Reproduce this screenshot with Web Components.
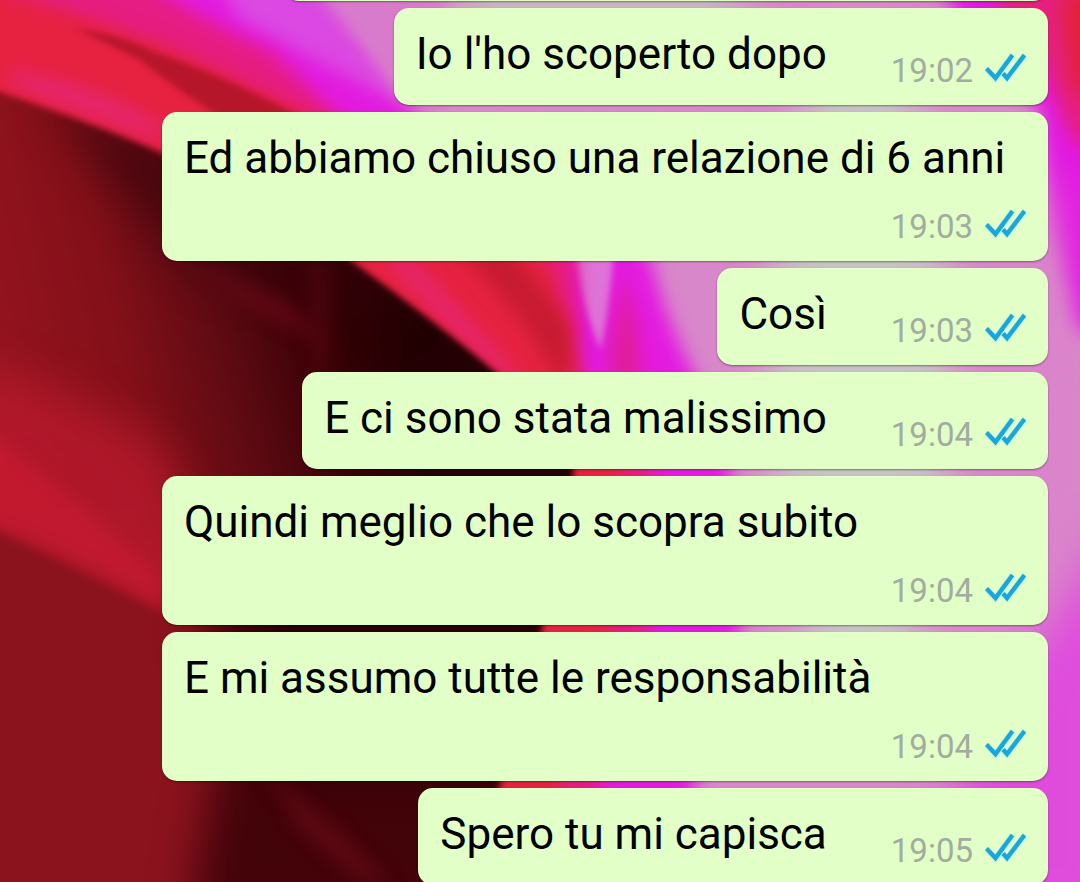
<!DOCTYPE html>
<html lang="it">
<head>
<meta charset="utf-8">
<meta name="viewport" content="width=device-width, initial-scale=1">
<title>Chat</title>
<style>
  html, body { margin: 0; height: 100%; }
  body { font-family: Roboto, "Liberation Sans", sans-serif; }
</style>
</head>
<body>
<chat-screen>
  <chat-bubble class="earlier" aria-hidden="true"></chat-bubble>
  <chat-bubble time="19:02">Io l'ho scoperto dopo</chat-bubble>
  <chat-bubble time="19:03">Ed abbiamo chiuso una relazione di 6 anni</chat-bubble>
  <chat-bubble time="19:03">Così</chat-bubble>
  <chat-bubble time="19:04">E ci sono stata malissimo</chat-bubble>
  <chat-bubble time="19:04">Quindi meglio che lo scopra subito</chat-bubble>
  <chat-bubble time="19:04">E mi assumo tutte le responsabilità</chat-bubble>
  <chat-bubble time="19:05">Spero tu mi capisca</chat-bubble>
</chat-screen>

<template id="screen">
  <style>
    :host { display: block; position: relative; height: 100vh; overflow: hidden; background: #93141f; }
    chat-wallpaper { position: absolute; inset: 0; }
    .thread {
      position: relative;
      display: flex; flex-direction: column; align-items: flex-end; gap: 7px;
      /* the thread is scrolled: only the edge of the first bubble is in view */
      margin-top: -96px;
      padding: 0 32px 0 162px;
    }
    ::slotted(.earlier) { width: 764px; }
  </style>
  <chat-wallpaper></chat-wallpaper>
  <main class="thread"><slot></slot></main>
</template>

<template id="bubble">
  <style>
    :host {
      display: flex; flex-wrap: wrap; gap: 13px 64px; box-sizing: border-box;
      max-width: 100%; padding: 20px 22px 15px 22px; border-radius: 15px;
      background: #e1ffc7; box-shadow: 0 1px 2px rgba(0, 0, 0, .4);
    }
    p { margin: 0; padding-bottom: 10px; min-height: 52px; font-size: 44px; line-height: 52px; color: #000; }
    .meta { display: flex; align-items: flex-end; gap: 12px; margin-left: auto; }
    time { font-size: 33px; line-height: 39px; color: #a2aca0; }
    :host(:not([time])) .meta { display: none; }
  </style>
  <p><slot></slot></p>
  <div class="meta"><time></time><read-ticks></read-ticks></div>
</template>

<template id="ticks">
  <style>
    :host { display: block; width: 41px; height: 39px; }
    svg { display: block; }
  </style>
  <svg width="41" height="39" viewBox="0 0 41 39" role="img" aria-label="Letto" fill="none" stroke-linecap="butt">
    <g stroke="#c0f7e8" stroke-width="6.400"><path d="M1 18L10.500 27.500L28 4M17.500 23L22 27.500L40 4"/></g>
    <g stroke="#1ba5da" stroke-width="4.400"><path d="M1.500 17.500L10.500 27L27.500 4M18 22.500L22 27L39.500 4"/></g>
  </svg>
</template>

<template id="wallpaper">
  <style>
    :host { display: block; }
    svg { display: block; width: 100%; height: 100%; }
    filter { color-interpolation-filters: sRGB; }
  </style>
  <svg viewBox="0 0 1080 882" preserveAspectRatio="none" aria-hidden="true">
    <defs>
      <filter id="b3" filterUnits="userSpaceOnUse" x="-100" y="-100" width="1280" height="1100"><feGaussianBlur stdDeviation="3"/></filter>
      <filter id="b9" filterUnits="userSpaceOnUse" x="-100" y="-100" width="1280" height="1100"><feGaussianBlur stdDeviation="9"/></filter>
      <filter id="b20" filterUnits="userSpaceOnUse" x="-100" y="-100" width="1280" height="1100"><feGaussianBlur stdDeviation="22"/></filter>
      <linearGradient id="dark" gradientUnits="userSpaceOnUse" x1="0" y1="500" x2="420" y2="400">
        <stop offset="0" stop-color="#98141f"/><stop offset=".35" stop-color="#841019"/>
        <stop offset=".6" stop-color="#5c0a12"/><stop offset=".82" stop-color="#360005"/><stop offset="1" stop-color="#220003"/>
      </linearGradient>
      <clipPath id="in"><path d="M-40 78L0 92Q90 122 160 152Q260 195 350 260Q440 325 500 376Q560 425 574 470L542 628L500 784L470 920H-40Z"/></clipPath>
    </defs>
    <rect width="1080" height="882" fill="#d987cb"/>
    <!-- pale centre of the petals -->
    <ellipse cx="860" cy="370" rx="90" ry="340" fill="#c8c2c4" filter="url(#b20)"/>
    <ellipse cx="600" cy="10" rx="150" ry="60" fill="#c9b6c0" filter="url(#b20)"/>
    <!-- right edge -->
    <path d="M930 -30L960 20L1040 110L1050 220L1075 330L1120 340V-30Z" fill="#e21ae2" filter="url(#b9)"/>
    <path d="M1030 180L1050 190L1060 300L1072 350L1060 640L1030 640Z" fill="#db84cb" filter="url(#b20)"/>
    <path d="M975 -30L1040 60L1068 130L1120 190V-30Z" fill="#e5207c" filter="url(#b9)"/>
    <path d="M1062 0L1120 -20V105L1074 90Z" fill="#e22134" filter="url(#b9)"/>
    <path d="M1000 700L1120 520V920H900Z" fill="#df4cdc" filter="url(#b20)"/>
    <!-- violet and magenta folds -->
    <path d="M150 -40H215Q300 10 350 50Q400 105 470 150L650 255Q665 320 695 375L730 470Q745 560 740 640L690 800L680 920H420V300L280 110L120 20Z" fill="#e31be0" filter="url(#b9)"/>
    <path d="M215 -20H320Q370 40 400 100Q330 70 240 20Z" fill="#db48e2" filter="url(#b9)"/>
    <path d="M310 -20L440 -20L450 110L400 90Z" fill="#d87bcb" filter="url(#b9)"/>
    <path d="M574 245H614Q610 310 601 350Q582 310 574 245Z" fill="#df74d8" filter="url(#b3)"/>
    <path d="M624 275Q642 330 640 400L615 430L610 360Z" fill="#e01d98" filter="url(#b9)"/>
    <!-- red band -->
    <path d="M-40 -40H110Q200 20 270 50L340 118L575 245L582 372L655 470L650 628L600 784L570 920H300L300 400L-40 130Z" fill="#e61d82" filter="url(#b9)"/>
    <path d="M-40 -10L10 -6Q150 35 220 70L340 130L550 262L574 372L622 470L610 628L560 784L530 920H250V420L-40 220Z" fill="#e62240" filter="url(#b9)"/>
    <path d="M75 28Q130 38 150 50Q230 78 300 116L225 120Q170 85 140 60Z" fill="#ae1427" opacity=".85" filter="url(#b3)"/>
    <path d="M455 250H510Q555 300 571 330L569 380H558Q515 300 455 250Z" fill="#c71b30" filter="url(#b9)"/>
    <path d="M10 70Q100 85 160 125L165 142Q90 115 10 84ZM385 258H410L460 310L520 378H500Z" fill="#e6267d" opacity=".8" filter="url(#b9)"/>
    <!-- dark petal -->
    <g filter="url(#b3)">
      <g clip-path="url(#in)">
        <rect x="-40" y="0" width="700" height="940" fill="url(#dark)"/>
        <path d="M40 92L160 140L400 270V320L190 270L100 170Z" fill="#35040a" opacity=".6" filter="url(#b20)"/>
        <path d="M-40 360L0 370Q80 395 160 445L250 640L160 615L0 530H-40Z" fill="#b81a2d" opacity=".8" filter="url(#b20)"/>
        <path d="M-40 420L0 440Q90 510 165 580V612Q80 560 0 530H-40Z" fill="#c81a32" opacity=".75" filter="url(#b9)"/>
        <path d="M-40 528L0 533Q80 570 165 616L420 790V920H-40Z" fill="#8b131e" filter="url(#b3)"/>
        <path d="M200 600L220 740L190 920H560V560Z" fill="#420309" filter="url(#b20)"/>
        <path d="M250 600H560V770H300Z" fill="#240003" filter="url(#b20)"/>
        <path d="M180 256L290 306L330 350L260 310Z" fill="#760b1d" opacity=".7" filter="url(#b9)"/>
        <path d="M305 260H330L332 375H312Z" fill="#580712" opacity=".6" filter="url(#b9)"/>
        <path d="M265 770L340 830L390 882H360L300 830Z" fill="#700c19" opacity=".6" filter="url(#b9)"/>
      </g>
    </g>
  </svg>
</template>

<script>
  const stamp = (host, id) => {
    const root = host.attachShadow({ mode: "open" });
    root.append(document.getElementById(id).content.cloneNode(true));
    return root;
  };

  customElements.define("read-ticks", class extends HTMLElement {
    constructor() { super(); stamp(this, "ticks"); }
  });

  customElements.define("chat-wallpaper", class extends HTMLElement {
    constructor() { super(); stamp(this, "wallpaper"); }
  });

  customElements.define("chat-bubble", class extends HTMLElement {
    constructor() { super(); stamp(this, "bubble"); }
    connectedCallback() {
      this.shadowRoot.querySelector("time").textContent = this.getAttribute("time") || "";
    }
  });

  customElements.define("chat-screen", class extends HTMLElement {
    constructor() { super(); stamp(this, "screen"); }
  });
</script>
</body>
</html>
